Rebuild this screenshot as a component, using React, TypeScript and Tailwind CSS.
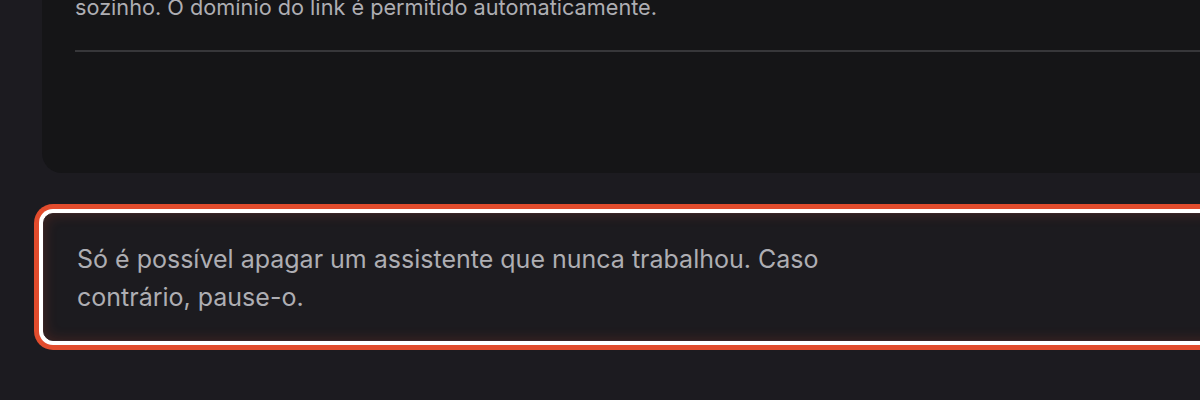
import React from "react";

const font = { fontFamily: "Inter, 'Noto Sans', sans-serif" };

export default function App() {
  return (
    <div
      className="w-[1200px] h-[400px] overflow-hidden bg-[#1c1b20] pl-[42px]"
      style={font}
    >
      <div className="w-[1300px]">
        {/* card above, only the bottom part is in view */}
        <div className="-mt-[44px] pt-[32px] pl-[33px] pb-[121px] bg-[#151517] rounded-b-[20px]">
          <p className="text-[21.7px] leading-[38px] text-[#aeaeb3] whitespace-nowrap">
            sozinho. O domínio do link é permitido automaticamente.
          </p>
          <div className="mt-[24px] h-[2px] bg-[#37373a]" />
        </div>

        {/* highlighted warning box */}
        <div className="mt-[40px] ml-[1px] rounded-[10px] bg-[#1c1b1f] border border-[#3a2526] pl-[33px] pt-[27px] pb-[24px] shadow-[0_0_0_4px_#ffffff,0_0_0_9px_#e24c2d,inset_0_0_14px_rgba(226,76,45,0.2)]">
          <p className="max-w-[800px] text-[25px] leading-[37.5px] text-[#aeaeb3]">
            Só é possível apagar um assistente que nunca trabalhou. Caso contrário, pause-o.
          </p>
        </div>
      </div>
    </div>
  );
}
